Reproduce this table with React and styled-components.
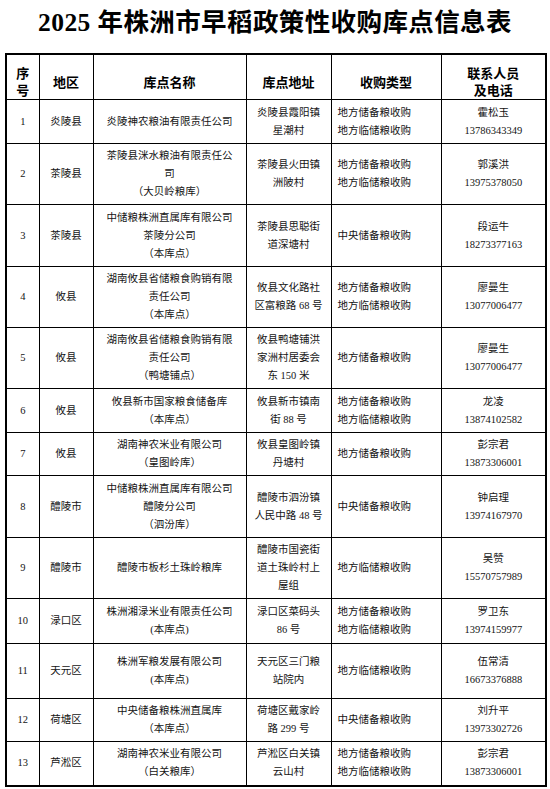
import React from "react";
import styled, { createGlobalStyle } from "styled-components";

const Global = createGlobalStyle`
  html, body { margin: 0; padding: 0; background: #fff; }
  body {
    width: 550px;
    font-family: "Liberation Serif", "Noto Sans CJK SC", serif;
    color: #111;
  }
`;

const Page = styled.div`
  width: 550px;
  padding-bottom: 4px;
`;

const Title = styled.h1`
  margin: 0;
  height: 53px;
  padding-top: 1px;
  box-sizing: border-box;
  line-height: 44px;
  text-align: center;
  font-size: 25.5px;
  font-weight: 700;
  color: #000;
  letter-spacing: 0.4px;
  white-space: nowrap;
`;

const Table = styled.table`
  margin-left: 5px;
  width: 540px;
  border-collapse: collapse;
  table-layout: fixed;
  border: 2px solid #000;
`;

const HeadCell = styled.th`
  border: 1px solid #000;
  padding: 10px 2px 0;
  font-size: 13px;
  line-height: 17px;
  font-weight: 700;
  text-align: center;
  vertical-align: middle;
  color: #000;
`;

const Row = styled.tr`
  height: ${(p) => p.$h}px;
`;

const Cell = styled.td`
  border: 1px solid #000;
  padding: 0 1px 0 ${(p) => (p.$left ? "6px" : "1px")};
  font-size: 10.5px;
  line-height: 18px;
  text-align: ${(p) => (p.$left ? "left" : "center")};
  vertical-align: middle;
  white-space: nowrap;
  color: #141414;
`;

const Line = styled.div`
  display: block;
`;

const cols = [33, 54, 153, 85, 110, 105];

const rows = [
  { h: 44, area: "炎陵县", name: ["炎陵神农粮油有限责任公司"], addr: ["炎陵县霞阳镇", "星潮村"], type: ["地方储备粮收购", "地方临储粮收购"], contact: ["霍松玉", "13786343349"] },
  { h: 61, area: "茶陵县", name: ["茶陵县洣水粮油有限责任公", "司", "（大贝岭粮库）"], addr: ["茶陵县火田镇", "洲陂村"], type: ["地方储备粮收购", "地方临储粮收购"], contact: ["郭溪洪", "13975378050"] },
  { h: 62, area: "茶陵县", name: ["中储粮株洲直属库有限公司", "茶陵分公司", "（本库点）"], addr: ["茶陵县思聪街", "道深塘村"], type: ["中央储备粮收购"], contact: ["段运牛", "18273377163"] },
  { h: 61, area: "攸县", name: ["湖南攸县省储粮食购销有限", "责任公司", "（本库点）"], addr: ["攸县文化路社", "区富粮路 68 号"], type: ["地方储备粮收购", "地方临储粮收购"], contact: ["廖曼生", "13077006477"] },
  { h: 61, area: "攸县", name: ["湖南攸县省储粮食购销有限", "责任公司", "（鸭塘铺点）"], addr: ["攸县鸭塘铺洪", "家洲村居委会", "东 150 米"], type: ["地方储备粮收购"], contact: ["廖曼生", "13077006477"] },
  { h: 44, area: "攸县", name: ["攸县新市国家粮食储备库", "（本库点）"], addr: ["攸县新市镇南", "街 88 号"], type: ["地方储备粮收购", "地方临储粮收购"], contact: ["龙凌", "13874102582"] },
  { h: 43, area: "攸县", name: ["湖南神农米业有限公司", "（皇图岭库）"], addr: ["攸县皇图岭镇", "丹塘村"], type: ["地方储备粮收购"], contact: ["彭宗君", "13873306001"] },
  { h: 62, area: "醴陵市", name: ["中储粮株洲直属库有限公司", "醴陵分公司", "（泗汾库）"], addr: ["醴陵市泗汾镇", "人民中路 48 号"], type: ["中央储备粮收购"], contact: ["钟启理", "13974167970"] },
  { h: 61, area: "醴陵市", name: ["醴陵市板杉土珠岭粮库"], addr: ["醴陵市国瓷街", "道土珠岭村上", "屋组"], type: ["地方临储粮收购"], contact: ["吴赞", "15570757989"] },
  { h: 45, area: "渌口区", name: ["株洲湘渌米业有限责任公司", "(本库点)"], addr: ["渌口区菜码头", "86 号"], type: ["地方储备粮收购", "地方临储粮收购"], contact: ["罗卫东", "13974159977"] },
  { h: 55, area: "天元区", name: ["株洲军粮发展有限公司", "(本库点)"], addr: ["天元区三门粮", "站院内"], type: ["地方临储粮收购"], contact: ["伍常清", "16673376888"] },
  { h: 43, area: "荷塘区", name: ["中央储备粮株洲直属库", "（本库点）"], addr: ["荷塘区戴家岭", "路 299 号"], type: ["中央储备粮收购"], contact: ["刘升平", "13973302726"] },
  { h: 44, area: "芦淞区", name: ["湖南神农米业有限公司", "（白关粮库）"], addr: ["芦淞区白关镇", "云山村"], type: ["地方储备粮收购", "地方临储粮收购"], contact: ["彭宗君", "13873306001"] },
];

const Lines = ({ items }) => items.map((t, i) => <Line key={i}>{t}</Line>);

export default function App() {
  return (
    <Page>
      <Global />
      <Title>2025 年株洲市早稻政策性收购库点信息表</Title>
      <Table>
        <colgroup>
          {cols.map((w, i) => (
            <col key={i} style={{ width: w }} />
          ))}
        </colgroup>
        <thead>
          <Row $h={44}>
            <HeadCell>
              <Lines items={["序", "号"]} />
            </HeadCell>
            <HeadCell>地区</HeadCell>
            <HeadCell>库点名称</HeadCell>
            <HeadCell>库点地址</HeadCell>
            <HeadCell>收购类型</HeadCell>
            <HeadCell>
              <Lines items={["联系人员", "及电话"]} />
            </HeadCell>
          </Row>
        </thead>
        <tbody>
          {rows.map((r, i) => (
            <Row key={i} $h={r.h}>
              <Cell>{i + 1}</Cell>
              <Cell>{r.area}</Cell>
              <Cell>
                <Lines items={r.name} />
              </Cell>
              <Cell>
                <Lines items={r.addr} />
              </Cell>
              <Cell $left>
                <Lines items={r.type} />
              </Cell>
              <Cell>
                <Lines items={r.contact} />
              </Cell>
            </Row>
          ))}
        </tbody>
      </Table>
    </Page>
  );
}
